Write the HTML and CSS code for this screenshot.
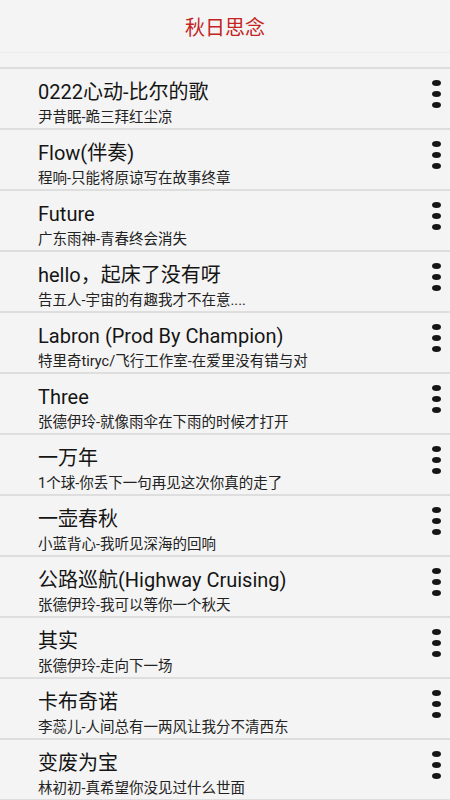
FILE: index.html
```html
<!DOCTYPE html>
<html lang="zh-CN">
<head>
  <meta charset="UTF-8" />
  <meta name="viewport" content="width=device-width, initial-scale=1.0"/>
  <title>秋日思念</title>
  <link rel="stylesheet" href="styles.css">
</head>
<body>

  <header class="top-bar">
    <h1>秋日思念</h1>
  </header>

  <ul class="song-list" id="songList"></ul>

  <script>
    const songs = [
      ["0222心动-比尔的歌", "尹昔眠-跪三拜红尘凉"],
      ["Flow(伴奏)", "程响-只能将原谅写在故事终章"],
      ["Future", "广东雨神-青春终会消失"],
      ["hello，起床了没有呀", "告五人-宇宙的有趣我才不在意...."],
      ["Labron (Prod By Champion)", "特里奇tiryc/飞行工作室-在爱里没有错与对"],
      ["Three", "张德伊玲-就像雨伞在下雨的时候才打开"],
      ["一万年", "1个球-你丢下一句再见这次你真的走了"],
      ["一壶春秋", "小蓝背心-我听见深海的回响"],
      ["公路巡航(Highway Cruising)", "张德伊玲-我可以等你一个秋天"],
      ["其实", "张德伊玲-走向下一场"],
      ["卡布奇诺", "李蕊儿-人间总有一两风让我分不清西东"],
      ["变废为宝", "林初初-真希望你没见过什么世面"]
    ];

    const list = document.getElementById("songList");

    songs.forEach((song) => {
      const li = document.createElement("li");
      li.className = "song";
      li.innerHTML = `
        <div class="song-info">
          <div class="song-title">${song[0]}</div>
          <div class="song-sub">${song[1]}</div>
        </div>
        <div class="more"><span></span><span></span><span></span></div>
      `;
      list.appendChild(li);
    });
  </script>

</body>
</html>
```
FILE: styles.css
```css
:root {
  --bg-color: #f4f4f4;
  --accent: #c3241f;
  --line: #dedede;
}

body {
  margin: 0;
  font-family: Roboto, "Noto Sans CJK SC", sans-serif;
  background-color: var(--bg-color);
  color: #111;
}

.top-bar {
  height: 52px;
  border-bottom: 1px solid #ebebeb;
  display: flex;
  align-items: center;
  justify-content: center;
}

.top-bar h1 {
  margin: 0;
  font-size: 20px;
  font-weight: normal;
  color: var(--accent);
}

.song-list {
  list-style: none;
  margin: 14px 0 0;
  padding: 0;
  border-top: 2px solid var(--line);
}

.song {
  display: flex;
  height: 59px;
  border-bottom: 2px solid var(--line);
  padding-left: 38px;
  padding-right: 9px;
}

.song-info {
  flex: 1;
  padding-top: 10px;
}

.song-title {
  font-size: 20px;
  line-height: 26px;
  color: #151515;
}

.song-sub {
  margin-top: 4px;
  font-size: 14.5px;
  line-height: 18px;
  color: #222;
}

.more {
  display: flex;
  flex-direction: column;
  gap: 5px;
  padding-top: 11px;
}

.more span {
  width: 9px;
  height: 6px;
  border-radius: 50%;
  background-color: #151515;
}
```
